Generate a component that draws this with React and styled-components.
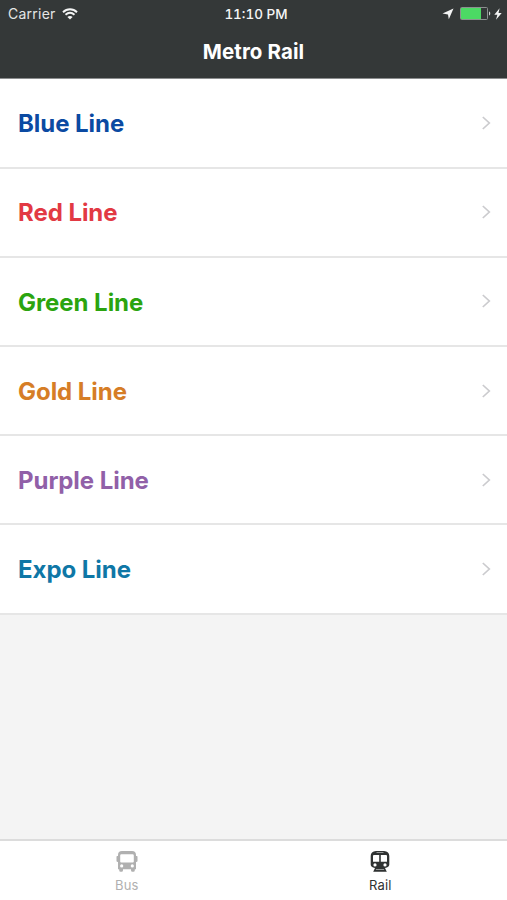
import React, { Component } from 'react';
import styled, { createGlobalStyle } from 'styled-components';

const lines = [
    { name: 'Blue Line', color: '#0b4aa2' },
    { name: 'Red Line', color: '#e23943' },
    { name: 'Green Line', color: '#2ba40f' },
    { name: 'Gold Line', color: '#d67d26' },
    { name: 'Purple Line', color: '#9160a8' },
    { name: 'Expo Line', color: '#0f77a6' },
];

class App extends Component {
    render() {
        return (
            <Container>
                <GlobalStyle />
                <Header>
                    <StatusBar>
                        <Carrier>
                            Carrier
                            <WifiIcon />
                        </Carrier>
                        <Time>11:10 PM</Time>
                        <Power>
                            <LocationIcon />
                            <BatteryIcon />
                            <BoltIcon />
                        </Power>
                    </StatusBar>
                    <Title>Metro Rail</Title>
                </Header>
                <List>
                    {lines.map(line => (
                        <Row key={line.name}>
                            <LineName $color={line.color}>{line.name}</LineName>
                            <ChevronIcon />
                        </Row>
                    ))}
                </List>
                <TabBar>
                    <Tab>
                        <BusIcon />
                        Bus
                    </Tab>
                    <Tab $active>
                        <RailIcon />
                        Rail
                    </Tab>
                </TabBar>
            </Container>
        );
    }
}
export default App;

const WifiIcon = () => (
    <svg width="16" height="12" viewBox="0 0 16 12" fill="none" stroke="#f4f5f5" strokeWidth="1.9">
        <path d="M1 4.2C5 .3 11 .3 15 4.2" />
        <path d="M3.5 6.8C6.2 4.4 9.8 4.4 12.5 6.8" />
        <path d="M8 11.6L5.4 8.9C6.9 7.6 9.1 7.6 10.6 8.9Z" fill="#f4f5f5" stroke="none" />
    </svg>
);

const LocationIcon = () => (
    <svg width="12" height="12" viewBox="0 0 12 12" fill="#f4f5f5">
        <path d="M11.5.4L6.8 11.2L6 6.5L.5 5.6Z" />
    </svg>
);

const BatteryIcon = () => (
    <svg width="31" height="13" viewBox="0 0 31 13">
        <rect x=".5" y=".5" width="27" height="12" rx="1" fill="none" stroke="#8c9090" />
        <rect x="1" y="1" width="20" height="11" fill="#4cd964" />
        <path d="M29 4.5C30.7 5 30.7 8 29 8.5Z" fill="#d0d2d2" />
    </svg>
);

const BoltIcon = () => (
    <svg width="8" height="12" viewBox="0 0 8 12" fill="#f4f5f5">
        <path d="M5.6.2L.3 6.8H3.4L2 11.8L7.7 4.9H4.5Z" />
    </svg>
);

const ChevronIcon = () => (
    <svg width="9" height="14" viewBox="0 0 9 14" fill="none" stroke="#cbcbce" strokeWidth="1.7">
        <path d="M.8 1L7.3 7L.8 13" />
    </svg>
);

const BusIcon = () => (
    <svg width="22" height="21" viewBox="0 0 22 21" fill="currentColor">
        <path
            fillRule="evenodd"
            d="M6 0H16C18.7 0 20 1.3 20 4V5H20.8Q21.5 5 21.5 5.8V10Q21.5 11 20 11V18.2H18.8V19.2Q18.8 20.8 17.4 20.8H16.4Q15 20.8 15 19.2V18.2H7V19.2Q7 20.8 5.6 20.8H4.6Q3.2 20.8 3.2 19.2V18.2H2V11Q.5 11 .5 10V5.8Q.5 5 1.2 5H2V4C2 1.3 3.3 0 6 0ZM5.4 3.2Q4.2 3.2 4.2 4.4V10.6Q4.2 11.6 5.2 11.6H16.8Q17.8 11.6 17.8 10.6V4.4Q17.8 3.2 16.6 3.2ZM5.7 13.3A1.6 1.6 0 1 0 5.7 16.5A1.6 1.6 0 1 0 5.7 13.3ZM16.3 13.3A1.6 1.6 0 1 0 16.3 16.5A1.6 1.6 0 1 0 16.3 13.3Z"
        />
    </svg>
);

const RailIcon = () => (
    <svg width="20" height="21" viewBox="0 0 20 21" fill="currentColor">
        <path
            fillRule="evenodd"
            d="M6 0H14C17.5 .5 19.3 2 19.3 5V13.5C19.3 15.5 17.8 16.5 15 17L16.8 20.8H3.2L5 17C2.2 16.5 .7 15.5 .7 13.5V5C.7 2 2.5 .5 6 0ZM6.5 1.5V2.1H13.5V1.5ZM4 4Q3 4 3 5V10.7H9.2V4ZM10.8 4V10.7H17V5Q17 4 16 4ZM5 12.3A1.6 1.6 0 1 0 5 15.5A1.6 1.6 0 1 0 5 12.3ZM15 12.3A1.6 1.6 0 1 0 15 15.5A1.6 1.6 0 1 0 15 12.3ZM6 18.5L5.8 19.1H14.2L14 18.5Z"
        />
    </svg>
);

const GlobalStyle = createGlobalStyle
`
    body {
        margin : 0;
        font-family : Inter, "Liberation Sans", sans-serif;
    }
`

const Container = styled.div
`
    display : flex;
    flex-direction : column;
    height : 900px;
    background-color : #f4f4f4;
`

const Header = styled.div
`
    box-sizing : border-box;
    height : 79px;
    background-color : #343838;
    border-bottom : 1px solid #8b8d8e;
    color : #ffffff;
`

const StatusBar = styled.div
`
    display : grid;
    grid-template-columns : 1fr auto 1fr;
    align-items : center;
    height : 27px;
    padding : 0 5px 0 8px;
    font-size : 14px;
`

const Carrier = styled.div
`
    display : flex;
    align-items : center;
    gap : 6px;
    color : #e4e6e6;
    letter-spacing : 0.25px;
`

const Time = styled.div
`
    padding-left : 2px;
    font-size : 13.5px;
    font-weight : 500;
    font-variant-numeric : tabular-nums;
    color : #f4f5f5;
`

const Power = styled.div
`
    display : flex;
    align-items : center;
    justify-content : flex-end;
    gap : 3px;

    svg:first-child {
        margin-right : 3px;
    }
`

const Title = styled.div
`
    line-height : 50px;
    font-size : 20.5px;
    font-weight : 650;
    letter-spacing : 0.1px;
    text-align : center;
`

const List = styled.div
`
    flex : 1;
`

const Row = styled.div
`
    display : flex;
    align-items : center;
    justify-content : space-between;
    box-sizing : border-box;
    height : 89.2px;
    padding : 0 16px 0 18px;
    background-color : #ffffff;
    border-bottom : 2px solid #e6e6e6;

    &:first-child {
        height : 89.6px;
    }
`

const LineName = styled.span
`
    padding-top : 1.4px;
    font-size : 24px;
    font-weight : 650;
    letter-spacing : -0.05px;
    color : ${props => props.$color};
`

const TabBar = styled.div
`
    display : flex;
    box-sizing : border-box;
    height : 61px;
    background-color : #ffffff;
    border-top : 2px solid #dcdcdc;
`

const Tab = styled.div
`
    flex : 1;
    display : flex;
    flex-direction : column;
    align-items : center;
    gap : 5px;
    padding-top : 10px;
    font-size : 13px;
    line-height : 16px;
    letter-spacing : 0.2px;
    color : ${props => props.$active ? '#2f3232' : '#b0b0b0'};
`
